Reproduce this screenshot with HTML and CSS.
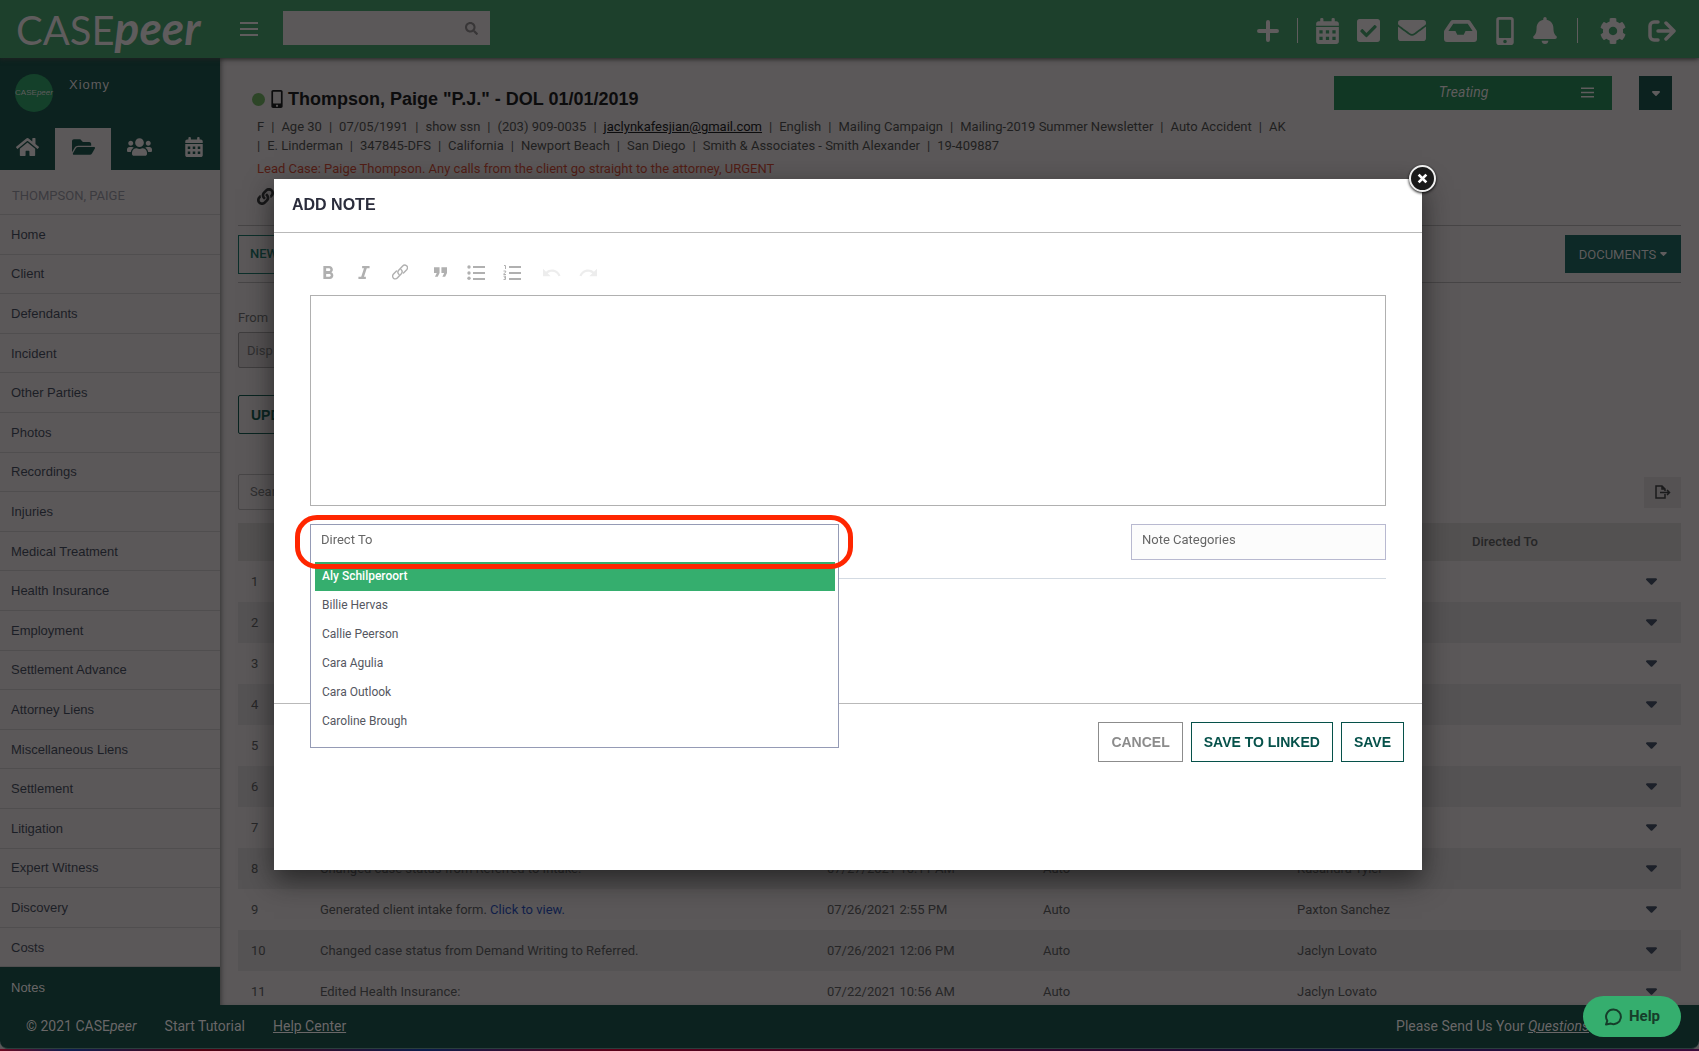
FILE: index.html
```html
<!DOCTYPE html>
<html lang="en">
<head>
<meta charset="utf-8">
<title>CASEpeer - Notes</title>
<link rel="stylesheet" href="styles.css">
</head>
<body>
<svg class="sprite" aria-hidden="true">
  <symbol id="bars" viewBox="0 0 18 14"><path d="M0 0h18v2H0zM0 6h18v2H0zM0 12h18v2H0z"/></symbol>
  <symbol id="search" viewBox="0 0 512 512"><path d="M505 442.700L405.300 343c-4.500-4.500-10.600-7-17-7H372c27.600-35.300 44-79.700 44-128C416 93.100 322.900 0 208 0S0 93.100 0 208s93.100 208 208 208c48.300 0 92.700-16.400 128-44v16.300c0 6.400 2.500 12.500 7 17l99.700 99.700c9.400 9.400 24.600 9.400 33.900 0l28.300-28.300c9.400-9.400 9.400-24.600.1-34zM208 336c-70.700 0-128-57.200-128-128 0-70.700 57.200-128 128-128 70.700 0 128 57.200 128 128 0 70.700-57.200 128-128 128z"/></symbol>
  <symbol id="plus" viewBox="0 0 22 22"><path d="M11 2v18M2 11h18" fill="none" stroke="currentColor" stroke-width="4" stroke-linecap="round"/></symbol>
  <symbol id="calendar" viewBox="0 0 448 512"><path fill-rule="evenodd" d="M0 464c0 26.500 21.500 48 48 48h352c26.500 0 48-21.500 48-48V176H0zM64 240h64v64H64zM192 240h64v64h-64zM320 240h64v64h-64zM64 368h64v64H64zM192 368h64v64h-64zM320 368h64v64h-64zM400 64h-32V24a24 24 0 0 0-24-24h-16a24 24 0 0 0-24 24v40H144V24a24 24 0 0 0-24-24h-16a24 24 0 0 0-24 24v40H48C21.500 64 0 85.500 0 112v40h448v-40c0-26.500-21.500-48-48-48z"/></symbol>
  <symbol id="check" viewBox="0 32 448 448"><path d="M400 480H48c-26.510 0-48-21.490-48-48V80c0-26.510 21.490-48 48-48h352c26.510 0 48 21.490 48 48v352c0 26.510-21.490 48-48 48zm-204.686-98.059l184-184c6.248-6.248 6.248-16.379 0-22.627l-22.627-22.627c-6.248-6.248-16.379-6.249-22.628 0L184 302.745l-70.059-70.059c-6.248-6.248-16.379-6.248-22.628 0l-22.627 22.627c-6.248 6.248-6.248 16.379 0 22.627l104 104c6.249 6.250 16.379 6.250 22.628.001z"/></symbol>
  <symbol id="envelope" viewBox="0 64 512 384"><path d="M502.300 190.800c3.900-3.100 9.700-.2 9.700 4.700V400c0 26.500-21.500 48-48 48H48c-26.500 0-48-21.500-48-48V195.600c0-5 5.700-7.800 9.700-4.700 22.400 17.400 52.100 39.500 154.100 113.600 21.100 15.400 56.700 47.800 92.200 47.600 35.700.3 72-32.800 92.300-47.600 102-74.100 131.600-96.300 154-113.700zM256 320c23.200.4 56.600-29.200 73.400-41.400 132.700-96.300 142.800-104.700 173.400-128.700 5.800-4.500 9.200-11.500 9.200-18.900v-19c0-26.500-21.500-48-48-48H48c-26.500 0-48 21.500-48 48v19c0 7.400 3.400 14.300 9.200 18.900 30.600 23.900 40.700 32.400 173.400 128.700 16.800 12.200 50.200 41.800 73.400 41.400z"/></symbol>
  <symbol id="inbox" viewBox="0 64 576 384"><path d="M567.938 243.908L462.250 85.374A48.003 48.003 0 0 0 422.311 64H153.689a48 48 0 0 0-39.938 21.374L8.062 243.908A47.994 47.994 0 0 0 0 270.533V400c0 26.510 21.490 48 48 48h480c26.510 0 48-21.490 48-48V270.533a47.994 47.994 0 0 0-8.062-26.625zM162.252 128h251.497l85.333 128H376l-32 64H232l-32-64H76.918l85.334-128z"/></symbol>
  <symbol id="mobile" viewBox="0 0 320 512"><path d="M272 0H48C21.500 0 0 21.500 0 48v416c0 26.500 21.500 48 48 48h224c26.500 0 48-21.500 48-48V48c0-26.500-21.500-48-48-48zM160 480c-17.700 0-32-14.300-32-32s14.300-32 32-32 32 14.300 32 32-14.300 32-32 32zm112-108c0 6.600-5.400 12-12 12H60c-6.600 0-12-5.400-12-12V60c0-6.600 5.400-12 12-12h200c6.600 0 12 5.400 12 12v312z"/></symbol>
  <symbol id="bell" viewBox="0 0 448 512"><path d="M224 512c35.320 0 63.970-28.650 63.970-64H160.030c0 35.350 28.650 64 63.970 64zm215.390-149.710c-19.320-20.760-55.470-51.990-55.470-154.290 0-77.700-54.480-139.900-127.940-155.160V32c0-17.670-14.320-32-31.980-32s-31.980 14.330-31.980 32v20.840C118.560 68.100 64.080 130.300 64.080 208c0 102.300-36.150 133.530-55.470 154.290-6 6.450-8.660 14.160-8.610 21.710.11 16.400 12.980 32 32.100 32h383.800c19.120 0 32-15.600 32.100-32 .05-7.550-2.610-15.270-8.610-21.710z"/></symbol>
  <symbol id="cog" viewBox="8 8 496 496"><path d="M487.400 315.700l-42.600-24.600c4.300-23.200 4.300-47 0-70.200l42.600-24.600c4.900-2.800 7.100-8.600 5.500-14-11.100-35.600-30-67.800-54.700-94.600-3.800-4.100-10-5.100-14.800-2.300L380.800 110c-17.900-15.400-38.500-27.300-60.800-35.100V25.800c0-5.600-3.900-10.500-9.400-11.700-36.700-8.200-74.300-7.800-109.200 0-5.500 1.200-9.400 6.100-9.400 11.700V75c-22.200 7.900-42.800 19.800-60.800 35.100L88.700 85.500c-4.900-2.800-11-1.900-14.800 2.300-24.700 26.700-43.600 58.900-54.700 94.600-1.700 5.400.6 11.200 5.500 14L67.300 221c-4.300 23.200-4.300 47 0 70.200l-42.600 24.600c-4.900 2.800-7.100 8.600-5.500 14 11.100 35.600 30 67.800 54.700 94.600 3.800 4.100 10 5.100 14.800 2.300l42.600-24.600c17.900 15.400 38.500 27.300 60.800 35.100v49.200c0 5.600 3.900 10.500 9.400 11.700 36.700 8.200 74.300 7.800 109.200 0 5.500-1.200 9.400-6.100 9.400-11.700v-49.200c22.200-7.900 42.800-19.800 60.800-35.100l42.600 24.600c4.900 2.800 11 1.900 14.800-2.300 24.700-26.700 43.600-58.900 54.700-94.600 1.500-5.500-.7-11.300-5.600-14.100zM256 336c-44.100 0-80-35.900-80-80s35.900-80 80-80 80 35.900 80 80-35.900 80-80 80z"/></symbol>
  <symbol id="signout" viewBox="0 0 28 22"><path d="M10 2H6a4 4 0 0 0-4 4v10a4 4 0 0 0 4 4h4M10 11h15M18 3l8 8-8 8" fill="none" stroke="currentColor" stroke-width="3.500" stroke-linecap="round" stroke-linejoin="round"/></symbol>
  <symbol id="home" viewBox="0 32 576 448"><path d="M280.370 148.260L96 300.110V464a16 16 0 0 0 16 16l112.060-.29a16 16 0 0 0 15.920-16V368a16 16 0 0 1 16-16h64a16 16 0 0 1 16 16v95.640a16 16 0 0 0 16 16.050L464 480a16 16 0 0 0 16-16V300L295.670 148.260a12.190 12.190 0 0 0-15.300 0zM571.600 251.470L488 182.560V44.050a12 12 0 0 0-12-12h-56a12 12 0 0 0-12 12v72.610L318.470 43a48 48 0 0 0-61 0L4.340 251.470a12 12 0 0 0-1.600 16.900l25.500 31A12 12 0 0 0 45.150 301l235.220-193.740a12.190 12.190 0 0 1 15.300 0L530.900 301a12 12 0 0 0 16.900-1.600l25.500-31a12 12 0 0 0-1.700-16.930z"/></symbol>
  <symbol id="folder" viewBox="0 64 576 384"><path d="M572.694 292.093L500.270 416.248A63.997 63.997 0 0 1 444.989 448H45.025c-18.523 0-30.064-20.093-20.731-36.093l72.424-124.155A64 64 0 0 1 152 256h399.964c18.523 0 30.064 20.093 20.730 36.093zM152 224h328v-48c0-26.510-21.490-48-48-48H272l-64-64H48C21.490 64 0 85.490 0 112v278.046l69.077-118.418C86.214 242.250 117.989 224 152 224z"/></symbol>
  <symbol id="users" viewBox="0 32 640 448"><path d="M96 224c35.300 0 64-28.700 64-64s-28.700-64-64-64-64 28.700-64 64 28.700 64 64 64zm448 0c35.300 0 64-28.700 64-64s-28.700-64-64-64-64 28.700-64 64 28.700 64 64 64zm32 32h-64c-17.600 0-33.500 7.100-45.100 18.600 40.300 22.100 68.900 62 75.100 109.400h66c17.700 0 32-14.300 32-32v-32c0-35.300-28.700-64-64-64zm-256 0c61.900 0 112-50.100 112-112S381.900 32 320 32 208 82.100 208 144s50.100 112 112 112zm76.800 32h-8.300c-20.800 10-43.900 16-68.500 16s-47.600-6-68.500-16h-8.300C179.600 288 128 339.600 128 403.200V432c0 26.500 21.500 48 48 48h288c26.500 0 48-21.500 48-48v-28.800c0-63.600-51.600-115.200-115.200-115.200zm-223.700-13.400C161.500 263.100 145.600 256 128 256H64c-35.300 0-64 28.700-64 64v32c0 17.700 14.300 32 32 32h65.900c6.300-47.400 34.900-87.300 75.200-109.400z"/></symbol>
  <symbol id="link" viewBox="0 0 512 512"><path d="M326.612 185.391c59.747 59.809 58.927 155.698.36 214.590-.11.12-.24.25-.36.37l-67.200 67.200c-59.270 59.270-155.699 59.262-214.960 0-59.270-59.260-59.270-155.700 0-214.960l37.106-37.106c9.840-9.840 26.786-3.300 27.294 10.606.648 17.722 3.826 35.527 9.690 52.721 1.986 5.822.567 12.262-3.783 16.612l-13.087 13.087c-28.026 28.026-28.905 73.660-1.155 101.960 28.024 28.579 74.086 28.749 102.325.51l67.200-67.190c28.191-28.191 28.073-73.757 0-101.830-3.701-3.694-7.429-6.564-10.341-8.569a16.037 16.037 0 0 1-6.947-12.606c-.396-10.567 3.348-21.456 11.698-29.806l21.054-21.055c5.521-5.521 14.182-6.199 20.584-1.731a152.482 152.482 0 0 1 20.522 17.197zM467.547 44.449c-59.261-59.262-155.690-59.270-214.960 0l-67.200 67.200c-.12.12-.25.25-.36.37-58.566 58.892-59.387 154.781.36 214.590a152.454 152.454 0 0 0 20.521 17.196c6.402 4.468 15.064 3.789 20.584-1.731l21.054-21.055c8.350-8.350 12.094-19.239 11.698-29.806a16.037 16.037 0 0 0-6.947-12.606c-2.912-2.005-6.640-4.875-10.341-8.569-28.073-28.073-28.191-73.639 0-101.830l67.200-67.190c28.239-28.239 74.300-28.069 102.325.51 27.750 28.300 26.872 73.934-1.155 101.960l-13.087 13.087c-4.350 4.350-5.769 10.790-3.783 16.612 5.864 17.194 9.042 34.999 9.690 52.721.509 13.906 17.454 20.446 27.294 10.606l37.106-37.106c59.271-59.259 59.271-155.699.001-214.959z"/></symbol>
  <symbol id="caret" viewBox="0 0 10 6"><path d="M1 0h8a1 1 0 0 1 .7 1.700L5.700 5.700a1 1 0 0 1-1.400 0L.3 1.700A1 1 0 0 1 1 0z"/></symbol>
  <symbol id="export" viewBox="0 0 16 14"><path d="M10 9v4H1V1h6l3 3v2M7 1v3h3M5 7.500h9M12 5l2.500 2.500L12 10" fill="none" stroke="currentColor" stroke-width="1.500"/></symbol>
  <symbol id="bold" viewBox="6 4 12 14"><path d="M15.600 10.790c.97-.67 1.650-1.770 1.650-2.790 0-2.260-1.750-4-4-4H7v14h7.040c2.090 0 3.710-1.700 3.710-3.790 0-1.520-.86-2.820-2.150-3.420zM10 6.500h3c.83 0 1.500.67 1.500 1.500s-.67 1.500-1.500 1.500h-3v-3zm3.500 9H10v-3h3.500c.83 0 1.500.67 1.500 1.500s-.67 1.500-1.500 1.500z"/></symbol>
  <symbol id="italic" viewBox="6 4 12 14"><path d="M10 4v2.500h2l-3 9H6V18h8v-2.500h-2l3-9h3V4z"/></symbol>
  <symbol id="chain" viewBox="0 0 16 16"><g fill="none" stroke="currentColor" stroke-width="1.400" stroke-linecap="round"><path d="M7 10.500a3 3 0 0 1-.3-4.200l4-4.300a2.700 2.700 0 0 1 4 3.700L11.500 9"/><path d="M9 5.500a3 3 0 0 1 .3 4.200l-4 4.300a2.700 2.700 0 0 1-4-3.700L4.500 7"/></g></symbol>
  <symbol id="quote" viewBox="0 0 14 10"><path d="M0 0h6v6L4 10H1l2-4H0zM8 0h6v6l-2 4H9l2-4H8z"/></symbol>
  <symbol id="ul" viewBox="0 0 18 15"><path d="M6 1h12v2H6zM6 7h12v2H6zM6 13h12v2H6z"/><circle cx="2" cy="2" r="1.700"/><circle cx="2" cy="8" r="1.700"/><circle cx="2" cy="13.300" r="1.700"/></symbol>
  <symbol id="ol" viewBox="0 0 18 15"><path d="M6 1h12v2H6zM6 7h12v2H6zM6 13h12v2H6z"/><path d="M1 .5h1.500V4M.5 6h2.200v1L.7 9v.5h2.300M.5 11.200h2v3.300h-2M1 12.800h1.500" fill="none" stroke="currentColor"/></symbol>
  <symbol id="undo" viewBox="2 6 21 11"><path d="M12.500 8c-2.650 0-5.050.99-6.900 2.600L2 7v9h9l-3.620-3.620c1.390-1.160 3.160-1.880 5.120-1.880 3.540 0 6.550 2.310 7.600 5.500l2.370-.78C21.080 11.030 17.150 8 12.500 8z"/></symbol>
  <symbol id="redo" viewBox="2 6 21 11"><path d="M12.500 8c2.650 0 5.050.99 6.900 2.600L23 7v9h-9l3.620-3.620c-1.390-1.160-3.160-1.880-5.120-1.880-3.540 0-6.550 2.310-7.600 5.500l-2.370-.78C3.920 11.030 7.850 8 12.500 8z"/></symbol>
  <symbol id="chat" viewBox="0 0 18 18"><path d="M9.500 1.500a7.300 7.300 0 1 1-2.600 14.100L2 16.500l1.300-3.700A7.300 7.300 0 0 1 9.500 1.500z" fill="none" stroke="currentColor" stroke-width="2" stroke-linejoin="round"/></symbol>
  <symbol id="close" viewBox="0 0 10 10"><path d="M1.500 1.500l7 7M8.500 1.500l-7 7" stroke="currentColor" stroke-width="2.500"/></symbol>
</svg>

<header class="topbar">
  <a class="logo" href="#"><span class="logo-case">CASE</span><span class="logo-peer">peer</span></a>
  <button class="icon-btn" aria-label="Menu"><svg class="i-bars"><use href="#bars"/></svg></button>
  <div class="top-search"><input type="search" aria-label="Search"><svg class="i-search"><use href="#search"/></svg></div>
  <nav class="top-icons">
    <button class="icon-btn" aria-label="Add"><svg class="i-plus"><use href="#plus"/></svg></button>
    <span class="divider"></span>
    <button class="icon-btn" aria-label="Calendar"><svg class="i-calendar"><use href="#calendar"/></svg></button>
    <button class="icon-btn" aria-label="Tasks"><svg class="i-check"><use href="#check"/></svg></button>
    <button class="icon-btn" aria-label="Mail"><svg class="i-envelope"><use href="#envelope"/></svg></button>
    <button class="icon-btn" aria-label="Inbox"><svg class="i-inbox"><use href="#inbox"/></svg></button>
    <button class="icon-btn" aria-label="Texts"><svg class="i-mobile"><use href="#mobile"/></svg></button>
    <button class="icon-btn" aria-label="Alerts"><svg class="i-bell"><use href="#bell"/></svg></button>
  </nav>
  <nav class="top-icons account">
    <span class="divider"></span>
    <button class="icon-btn" aria-label="Settings"><svg class="i-cog"><use href="#cog"/></svg></button>
    <button class="icon-btn" aria-label="Sign out"><svg class="i-signout"><use href="#signout"/></svg></button>
  </nav>
</header>

<div class="body">
  <aside class="sidebar">
    <div class="user"><span class="avatar">CASE<i>peer</i></span><span class="user-name">Xiomy</span></div>
    <nav class="tabs">
      <a href="#" aria-label="Home"><svg class="t-home"><use href="#home"/></svg></a>
      <a href="#" aria-label="Cases" class="on"><svg class="t-folder"><use href="#folder"/></svg></a>
      <a href="#" aria-label="Contacts"><svg class="t-users"><use href="#users"/></svg></a>
      <a href="#" aria-label="Calendar"><svg class="t-calendar"><use href="#calendar"/></svg></a>
    </nav>
    <h2 class="side-title">THOMPSON, PAIGE</h2>
    <nav class="side-nav">
      <a href="#">Home</a><a href="#">Client</a><a href="#">Defendants</a><a href="#">Incident</a><a href="#">Other Parties</a>
      <a href="#">Photos</a><a href="#">Recordings</a><a href="#">Injuries</a><a href="#">Medical Treatment</a><a href="#">Health Insurance</a>
      <a href="#">Employment</a><a href="#">Settlement Advance</a><a href="#">Attorney Liens</a><a href="#">Miscellaneous Liens</a><a href="#">Settlement</a>
      <a href="#">Litigation</a><a href="#">Expert Witness</a><a href="#">Discovery</a><a href="#">Costs</a><a href="#" class="on">Notes</a>
    </nav>
  </aside>

  <main class="main">
    <section class="case-head">
      <div class="case-info">
        <h1><span class="dot"></span><svg><use href="#mobile"/></svg>Thompson, Paige "P.J." - DOL 01/01/2019</h1>
        <p class="facts">F<b>|</b>Age 30<b>|</b>07/05/1991<b>|</b>show ssn<b>|</b>(203) 909-0035<b>|</b><a href="#">jaclynkafesjian@gmail.com</a><b>|</b>English<b>|</b>Mailing Campaign<b>|</b>Mailing-2019 Summer Newsletter<b>|</b>Auto Accident<b>|</b>AK</p>
        <p class="facts more"><b>|</b>E. Linderman<b>|</b>347845-DFS<b>|</b>California<b>|</b>Newport Beach<b>|</b>San Diego<b>|</b>Smith &amp; Associates - Smith Alexander<b>|</b>19-409887</p>
        <p class="lead">Lead Case: Paige Thompson. Any calls from the client go straight to the attorney, URGENT</p>
        <svg class="linked"><use href="#link"/></svg>
      </div>
      <button class="status"><span>Treating</span><svg><use href="#bars"/></svg></button>
      <button class="status-more" aria-label="More"><svg><use href="#caret"/></svg></button>
    </section>
    <section class="actions">
      <button class="outline new">NEW</button>
      <button class="documents">DOCUMENTS <svg><use href="#caret"/></svg></button>
    </section>
    <section class="filters">
      <label for="from">From</label>
      <input id="from" class="field from" value="Disp">
      <button class="outline update">UPDATE</button>
      <div class="table-tools">
        <input class="field find" aria-label="Search notes" placeholder="Search">
        <button class="export" aria-label="Export"><svg><use href="#export"/></svg></button>
      </div>
    </section>
    <table class="notes">
      <colgroup><col class="c-num"><col class="c-note"><col class="c-date"><col class="c-type"><col class="c-by"><col class="c-to"><col class="c-act"></colgroup>
      <thead><tr><th></th><th></th><th></th><th></th><th></th><th>Directed To</th><th></th></tr></thead>
      <tbody>
        <tr><td>1</td><td></td><td></td><td></td><td></td><td></td><td><svg><use href="#caret"/></svg></td></tr>
        <tr><td>2</td><td></td><td></td><td></td><td></td><td></td><td><svg><use href="#caret"/></svg></td></tr>
        <tr><td>3</td><td></td><td></td><td></td><td></td><td></td><td><svg><use href="#caret"/></svg></td></tr>
        <tr><td>4</td><td></td><td></td><td></td><td></td><td></td><td><svg><use href="#caret"/></svg></td></tr>
        <tr><td>5</td><td></td><td></td><td></td><td></td><td></td><td><svg><use href="#caret"/></svg></td></tr>
        <tr><td>6</td><td></td><td></td><td></td><td></td><td></td><td><svg><use href="#caret"/></svg></td></tr>
        <tr><td>7</td><td></td><td></td><td></td><td></td><td></td><td><svg><use href="#caret"/></svg></td></tr>
        <tr><td>8</td><td>Changed case status from Referred to Intake.</td><td>07/27/2021 10:11 AM</td><td>Auto</td><td>Kasandra Tyler</td><td></td><td><svg><use href="#caret"/></svg></td></tr>
        <tr><td>9</td><td>Generated client intake form. <a href="#">Click to view.</a></td><td>07/26/2021 2:55 PM</td><td>Auto</td><td>Paxton Sanchez</td><td></td><td><svg><use href="#caret"/></svg></td></tr>
        <tr><td>10</td><td>Changed case status from Demand Writing to Referred.</td><td>07/26/2021 12:06 PM</td><td>Auto</td><td>Jaclyn Lovato</td><td></td><td><svg><use href="#caret"/></svg></td></tr>
        <tr><td>11</td><td>Edited Health Insurance:</td><td>07/22/2021 10:56 AM</td><td>Auto</td><td>Jaclyn Lovato</td><td></td><td><svg><use href="#caret"/></svg></td></tr>
      </tbody>
    </table>
  </main>
</div>

<footer class="footer">
  <span>© 2021 CASE<i>peer</i></span>
  <span>Start Tutorial</span>
  <a href="#">Help Center</a>
  <span class="questions">Please Send Us Your <a href="#"><i>Questions</i></a></span>
</footer>
<div class="desktop-edge"></div>

<div class="overlay">
  <div class="modal" role="dialog" aria-labelledby="modal-title">
    <button class="close" aria-label="Close"><svg><use href="#close"/></svg></button>
    <h2 id="modal-title" class="modal-head">ADD NOTE</h2>
    <form class="modal-body">
      <div class="toolbar">
        <button type="button" aria-label="Bold"><svg class="e-char"><use href="#bold"/></svg></button>
        <button type="button" aria-label="Italic"><svg class="e-char"><use href="#italic"/></svg></button>
        <button type="button" aria-label="Link"><svg class="e-chain"><use href="#chain"/></svg></button>
        <button type="button" aria-label="Quote"><svg class="e-quote"><use href="#quote"/></svg></button>
        <button type="button" aria-label="Bulleted list"><svg class="e-list"><use href="#ul"/></svg></button>
        <button type="button" aria-label="Numbered list"><svg class="e-list"><use href="#ol"/></svg></button>
        <button type="button" aria-label="Undo" class="off"><svg class="e-list"><use href="#undo"/></svg></button>
        <button type="button" aria-label="Redo" class="off"><svg class="e-list"><use href="#redo"/></svg></button>
      </div>
      <textarea class="note" aria-label="Note"></textarea>
      <div class="pickers">
        <div class="direct">
          <input class="direct-input" aria-label="Direct To" placeholder="Direct To">
          <ul class="people" role="listbox">
            <li role="option" class="on">Aly Schilperoort</li>
            <li role="option">Billie Hervas</li>
            <li role="option">Callie Peerson</li>
            <li role="option">Cara Agulia</li>
            <li role="option">Cara Outlook</li>
            <li role="option">Caroline Brough</li>
          </ul>
          <span class="ring"></span>
        </div>
        <input class="categories" aria-label="Note Categories" placeholder="Note Categories">
      </div>
    </form>
    <div class="modal-foot">
      <button class="btn cancel">CANCEL</button>
      <button class="btn">SAVE TO LINKED</button>
      <button class="btn">SAVE</button>
    </div>
  </div>
</div>
<button class="help"><svg><use href="#chat"/></svg>Help</button>
</body>
</html>
```
FILE: styles.css
```css
* { box-sizing: border-box; }
body {
  margin: 0;
  height: 100vh;
  overflow: hidden;
  display: flex;
  flex-direction: column;
  background: #5b5859;
  color: #1f1f20;
  font: 13px/19px Roboto, "Liberation Sans", sans-serif;
}
h1, h2, p, ul { margin: 0; padding: 0; }
button, input, textarea { font: inherit; color: inherit; border: 0; border-radius: 0; padding: 0; margin: 0; background: none; }
a { color: inherit; text-decoration: none; }
svg { fill: currentColor; display: block; }
.sprite { display: none; }

/* top bar */
.topbar {
  flex: none;
  height: 58px;
  display: flex;
  align-items: center;
  padding-right: 23px;
  background: #1d402c;
  color: #5f5c5d;
  box-shadow: 0 1px 5px #222;
  position: relative;
  z-index: 2;
}
.logo {
  width: 224px;
  height: 58px;
  padding-left: 16px;
  display: flex;
  align-items: baseline;
  font-family: Lato, sans-serif;
}
.logo-case { font: 40px/56px "Liberation Sans Narrow", Lato, sans-serif; }
.logo-peer { font-size: 46px; line-height: 56px; font-style: italic; font-weight: 700; }
.icon-btn { display: flex; align-items: center; justify-content: center; }
.i-bars { width: 18px; height: 14px; margin: 0 16px; }
.top-search {
  width: 207px;
  height: 34px;
  margin: 0 auto 2px 9px;
  padding-right: 12px;
  display: flex;
  align-items: center;
  background: #5b5859;
  color: #383637;
}
.top-search input { flex: 1; min-width: 0; height: 34px; }
.i-search { width: 13px; height: 13px; }
.top-icons { display: flex; align-items: center; gap: 18px; padding-top: 3px; }
.account { gap: 22px; margin-left: 20px; }
.divider { width: 1px; height: 25px; background: #5f5c5d; }
.i-plus { width: 22px; height: 22px; }
.i-calendar { width: 23px; height: 26px; }
.i-check { width: 23px; height: 23px; }
.i-envelope { width: 28px; height: 21px; }
.i-inbox { width: 33px; height: 22px; }
.i-mobile { width: 20px; height: 28px; }
.i-bell { width: 24px; height: 27px; }
.i-cog { width: 26px; height: 26px; }
.i-signout { width: 28px; height: 22px; }

.body { flex: 1; min-height: 0; display: flex; }

/* sidebar */
.sidebar { width: 220px; flex: none; display: flex; flex-direction: column; font-family: "Liberation Sans", sans-serif; color: #1b1e26; }
.user { height: 70px; display: flex; gap: 16px; padding: 16px 15px 0; background: #0c221f; color: #5f5c5d; letter-spacing: 1px; }
.user-name { line-height: 21px; }
.avatar {
  width: 38px;
  height: 38px;
  border-radius: 50%;
  background: #14402a;
  font-size: 8px;
  line-height: 38px;
  text-align: center;
  letter-spacing: 0;
}
.tabs { height: 42px; display: grid; grid-template-columns: 55px 56px 57px 1fr; background: #0c221f; color: #5f5c5d; }
.tabs a { display: flex; align-items: center; justify-content: center; padding-bottom: 4px; }
.tabs .on { background: #5b5859; color: #0c221f; }
.t-home, .t-folder { width: 23px; height: 18px; }
.t-users { width: 25px; height: 18px; }
.t-calendar { width: 18px; height: 20px; }
.side-title {
  flex: none;
  height: 45px;
  padding: 16px 12px 0;
  border-bottom: 1px solid #504e4f;
  color: #3b3b40;
  font: 13px/19px Roboto, sans-serif;
}
.side-nav { flex: 1; min-height: 0; display: grid; grid-auto-rows: 1fr; margin-bottom: -2px; }
.side-nav a { display: flex; align-items: center; padding: 0 11px; border-bottom: 1px solid #504e4f; min-height: 0; }
.side-nav .on { background: #0c221f; color: #6a6768; border: 0; }

/* case page */
.main { flex: 1; min-width: 0; padding: 0 18px; overflow: hidden; box-shadow: inset 4px 0 5px -3px #333; }
.case-head { display: flex; align-items: flex-start; height: 168px; padding: 18px 9px 0 14px; border-bottom: 1px solid #474546; }
.case-info { flex: 1; min-width: 0; padding: 13px 0 0 5px; white-space: nowrap; }
h1 { display: flex; align-items: center; gap: 5px; margin: 0 0 8px -5px; font: bold 18px/20px "Liberation Sans", sans-serif; color: #0c0c0d; }
h1 svg { width: 12px; height: 18px; margin-left: 1px; }
.dot { width: 13px; height: 13px; border-radius: 50%; background: #2d4527; }
.facts b { font-weight: 400; margin: 0 7px; }
.facts.more b:first-child { margin-left: 0; }
.facts a { text-decoration: underline; color: #0c0c0d; }
.lead { margin-top: 4px; color: #521d15; }
.linked { width: 17px; height: 17px; margin-top: 10px; color: #161617; }
.status { width: 278px; height: 34px; display: grid; grid-template-columns: 1fr auto; align-items: center; padding: 0 18px 2px 12px; background: #113724; color: #5f5c5d; font-size: 14px; font-style: italic; }
.status svg { width: 13px; height: 11px; }
.status-more { width: 33px; height: 34px; margin-left: 27px; display: grid; place-items: center; background: #0c221f; color: #5f5c5d; }
.status-more svg { width: 8px; height: 5px; }
.actions { display: flex; justify-content: space-between; align-items: center; height: 57px; border-bottom: 1px solid #474546; }
.outline { height: 39px; padding: 0 11px 2px; border: 1px solid #0b2f2a; color: #0b2f2a; text-align: left; }
.new { width: 100px; font-weight: 500; }
.documents { display: flex; align-items: center; justify-content: center; gap: 4px; width: 116px; height: 38px; background: #0d2927; color: #5f5c5d; }
.documents svg { width: 7px; height: 4px; }
.filters { display: flex; flex-direction: column; align-items: flex-start; padding-top: 25px; color: #2c2c2d; }
.field { height: 36px; border: 1px solid #484647; border-radius: 2px; padding: 0 11px 2px; width: 200px; }
.from { margin: 5px 0 27px; padding: 0 8px; border-color: #3f3d3e; background: #555253; color: #2f2f30; }
.update { border-radius: 2px; border-color: #082420; color: #082420; padding: 0 12px; width: 100px; font: bold 14px "Liberation Sans", sans-serif; }
.table-tools { align-self: stretch; display: flex; justify-content: space-between; align-items: center; margin: 40px 0 13px; }
.find::placeholder { color: #2f2f30; opacity: 1; }
.export { width: 37px; height: 31px; display: grid; place-items: center; background: #555253; color: #1b1b1c; }
.export svg { width: 16px; height: 14px; }
.notes { width: 100%; table-layout: fixed; border-collapse: collapse; color: #262627; }
.notes th { height: 38px; padding: 0 0 2px; background: #535151; text-align: left; font-weight: 500; }
.notes td { height: 41px; padding: 0; white-space: nowrap; }
.notes td:first-child { padding-left: 13px; }
.notes tr:nth-child(even) td { background: #555354; }
.notes td a { color: #111f4a; }
.notes svg { width: 11px; height: 7px; color: #1c2029; }
.c-num { width: 82px; }
.c-note { width: 507px; }
.c-date { width: 216px; }
.c-type { width: 254px; }
.c-by { width: 175px; }
.c-act { width: 35px; }

.footer { flex: none; height: 44px; display: flex; align-items: center; gap: 28px; padding: 0 18px 0 26px; background: #0c221f; color: #6a6768; border-bottom: 1px solid #2a3f3d; border-radius: 0 0 8px 8px; font-size: 14px; position: relative; }
.footer a { text-decoration: underline; }
.questions { margin-left: auto; padding-right: 92px; }
.desktop-edge { flex: none; height: 2px; background: linear-gradient(90deg, #6b0820, #0c1e50 4%, #500010 12%, #0a1c4a 25%, #5a0018 36%, #32062c 60%, #100f3a 80%, #3b0a3a); }

/* dialog */
.overlay { position: fixed; inset: 0; z-index: 3; padding: 179px 277px 0 274px; }
.modal { position: relative; height: 691px; display: flex; flex-direction: column; background: #fff; box-shadow: 0 10px 26px rgba(20, 20, 20, .7); }
.close { position: absolute; right: -14px; top: -14px; width: 27px; height: 27px; display: grid; place-items: center; border-radius: 50%; background: #1a1a1a; border: 2px solid #eee; color: #fff; box-shadow: 0 1px 3px #000; }
.close svg { width: 11px; height: 11px; }
.modal-head { height: 54px; padding: 16px 18px 0; border-bottom: 1px solid #b9b9b9; color: #2b2d3c; font: bold 16px/19px "Liberation Sans", sans-serif; }
.modal-body { height: 471px; padding: 26px 36px 0; border-bottom: 1px solid #b9b9b9; }
.toolbar { display: flex; height: 26px; color: #b0b0b0; }
.toolbar button { width: 36px; height: 26px; display: grid; place-items: center; }
.toolbar button:nth-child(3n + 4) { margin-left: 4px; }
.toolbar .off { color: #ededed; }
.e-char { width: 12px; height: 13px; }
.e-chain { width: 16px; height: 16px; }
.e-quote { width: 13px; height: 10px; }
.e-list { width: 18px; height: 15px; }
.note { display: block; width: 100%; height: 211px; margin: 10px 0 18px; border: 1px solid #b0b0b0; resize: none; }
.pickers { display: flex; justify-content: space-between; align-items: flex-start; height: 55px; border-bottom: 1px solid #d3dae2; color: #666; }
.direct { position: relative; width: 529px; }
.direct-input { display: block; width: 100%; height: 38px; padding: 0 10px 8px; border: 1px solid #959bb5; border-bottom: 0; background: #fff; }
.direct-input::placeholder, .categories::placeholder { color: #666; opacity: 1; }
.people { position: absolute; top: 100%; left: 0; right: 0; padding: 0 3px 11px 4px; background: #fff; border: 1px solid #959bb5; border-top: 0; list-style: none; font-size: 12px; line-height: 29px; color: #55575f; z-index: 1; }
.people li { padding-left: 7px; }
.people .on { background: #35ae6e; color: #fff; font-weight: 500; }
.ring { position: absolute; z-index: 2; left: -15px; right: -14px; top: -9px; height: 54px; border: 5px solid #ff2600; border-radius: 22px; pointer-events: none; }
.categories { width: 255px; height: 36px; padding: 0 10px 6px; border: 1px solid #b8b9d0; background: #fcfcfc; }
.modal-foot { display: flex; justify-content: flex-end; gap: 8px; padding: 18px 18px 0; }
.btn { height: 40px; padding: 0 12px; border: 1px solid #06514a; background: #fff; color: #06514a; font: bold 14px "Liberation Sans", sans-serif; }
.cancel { border-color: #8c8c8c; color: #8c8c8c; }

.help { position: fixed; z-index: 4; right: 18px; bottom: 14px; width: 98px; height: 41px; display: flex; align-items: center; justify-content: center; gap: 7px; border-radius: 21px; background: #35ae6e; color: #163d2a; font-size: 15px; font-weight: 700; }
.help svg { width: 18px; height: 18px; }
```
